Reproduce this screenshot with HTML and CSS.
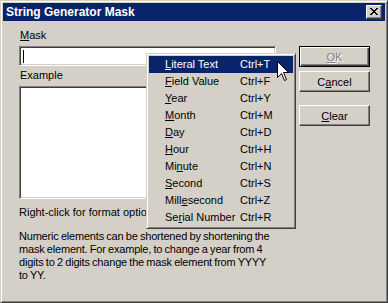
FILE: index.html
```html
<!DOCTYPE html>
<html lang="en">
<head>
    <meta charset="UTF-8">
    <title>String Generator Mask</title>
    <link rel="stylesheet" href="styles.css">
</head>
<body>

<div class="window">
    <div class="title-bar">
        <span class="title-text">String Generator Mask</span>
        <button class="close-btn">
            <svg width="8" height="7" viewBox="0 0 8 7"><path d="M0 0h2v1H0z M6 0h2v1H6z M1 1h2v1H1z M5 1h2v1H5z M2 2h4v1H2z M3 3h2v1H3z M2 4h4v1H2z M1 5h2v1H1z M5 5h2v1H5z M0 6h2v1H0z M6 6h2v1H6z" fill="#000"/></svg>
        </button>
    </div>

    <div class="dialog-body">
        <div class="left-col">
            <label class="field-label"><u>M</u>ask</label>
            <div class="edit-box mask-box"><span class="caret"></span></div>
            <label class="field-label example-label">Example</label>
            <div class="edit-box example-box"></div>
            <p class="hint">Right-click for format options</p>
            <p class="note">Numeric elements can be shortened by shortening the mask element. For example, to change a year from 4 digits to 2 digits change the mask element from YYYY to YY.</p>
        </div>
        <div class="button-col">
            <button class="btn btn-default" disabled><u>O</u>K</button>
            <button class="btn">C<u>a</u>ncel</button>
            <button class="btn btn-clear"><u>C</u>lear</button>
        </div>
    </div>

    <!-- right-click format menu -->
    <div class="context-menu">
        <div class="menu-item selected"><span><u>L</u>iteral Text</span><span>Ctrl+T</span></div>
        <div class="menu-item"><span><u>F</u>ield Value</span><span>Ctrl+F</span></div>
        <div class="menu-item"><span><u>Y</u>ear</span><span>Ctrl+Y</span></div>
        <div class="menu-item"><span><u>M</u>onth</span><span>Ctrl+M</span></div>
        <div class="menu-item"><span><u>D</u>ay</span><span>Ctrl+D</span></div>
        <div class="menu-item"><span><u>H</u>our</span><span>Ctrl+H</span></div>
        <div class="menu-item"><span>Mi<u>n</u>ute</span><span>Ctrl+N</span></div>
        <div class="menu-item"><span><u>S</u>econd</span><span>Ctrl+S</span></div>
        <div class="menu-item"><span>Mill<u>e</u>second</span><span>Ctrl+Z</span></div>
        <div class="menu-item"><span>Se<u>r</u>ial Number</span><span>Ctrl+R</span></div>
    </div>

    <svg class="mouse-cursor" width="13" height="21" viewBox="0 0 13 21">
        <path d="M0.5 0.5 L0.5 16.5 L4.5 12.5 L7.5 19.5 L9.5 18.5 L6.5 11.5 L11.5 11.5 Z" fill="#fff" stroke="#000" stroke-width="1"/>
    </svg>
</div>

</body>
</html>
```

FILE: styles.css
```css
* {
    margin: 0;
    padding: 0;
    box-sizing: border-box;
}

body {
    background: #d4d0c8;
    font-family: "Liberation Sans", Arial, sans-serif;
    font-size: 11px;
    line-height: 13px;
    color: #000;
}

u {
    text-decoration: underline;
    text-underline-offset: 1px;
}

.window {
    position: relative;
    width: 388px;
    height: 303px;
    padding: 2px;
    background: #d4d0c8;
    border: 1px solid;
    border-color: #d4d0c8 #404040 #404040 #d4d0c8;
    box-shadow: inset 1px 1px #fff, inset -1px -1px #808080;
}

.title-bar {
    height: 18px;
    background: #0a246a;
    display: flex;
    align-items: center;
    justify-content: space-between;
    padding-left: 3px;
}

.title-text {
    color: #fff;
    font-weight: bold;
    font-size: 12px;
}

.close-btn {
    width: 16px;
    height: 14px;
    margin-right: 3px;
    background: #d4d0c8;
    border: 1px solid;
    border-color: #fff #404040 #404040 #fff;
    box-shadow: inset -1px -1px #808080;
    display: flex;
    align-items: center;
    justify-content: center;
    padding: 0 1px 1px 0;
}

.close-btn svg {
    display: block;
}

.dialog-body {
    display: flex;
    gap: 23px;
    padding: 8px 0 0 16px;
}

.left-col {
    width: 257px;
    display: flex;
    flex-direction: column;
}

.field-label {
    display: block;
    padding-left: 1px;
    margin-bottom: 4px;
}

.example-label {
    margin-top: 3px;
}

.edit-box {
    background: #fff;
    border: 1px solid;
    border-color: #808080 #fff #fff #808080;
    box-shadow: inset 1px 1px #404040, inset -1px -1px #d4d0c8;
}

.mask-box {
    height: 20px;
    padding: 3px 0 0 3px;
}

.caret {
    display: block;
    width: 1px;
    height: 13px;
    background: #000;
}

.example-box {
    height: 113px;
}

.hint {
    margin-top: 7px;
    white-space: nowrap;
}

.note {
    margin-top: 11px;
    width: 254px;
    letter-spacing: -0.2px;
    word-spacing: -0.5px;
}

.button-col {
    width: 71px;
    display: flex;
    flex-direction: column;
    padding-top: 17px;
}

.btn {
    height: 21px;
    width: 71px;
    font-family: inherit;
    font-size: 11px;
    background: #d4d0c8;
    color: #000;
    border: 1px solid;
    border-color: #fff #404040 #404040 #fff;
    box-shadow: inset -1px -1px #808080;
    margin-bottom: 4px;
}

.btn-default {
    border-color: #000;
    box-shadow: inset 1px 1px #fff, inset -1px -1px #404040, inset -2px -2px #808080;
}

.btn:disabled {
    color: #808080;
    text-shadow: 1px 1px #fff;
}

.btn-clear {
    margin-top: 9px;
}

.context-menu {
    position: absolute;
    left: 145px;
    top: 52px;
    width: 150px;
    padding: 2px;
    background: #d4d0c8;
    border: 1px solid;
    border-color: #d4d0c8 #404040 #404040 #d4d0c8;
    box-shadow: inset 1px 1px #fff, inset -1px -1px #808080;
}

.menu-item {
    height: 17px;
    line-height: 17px;
    display: grid;
    grid-template-columns: 75px auto;
    padding-left: 16px;
    white-space: nowrap;
}

.menu-item.selected {
    background: #0a246a;
    color: #fff;
}

.mouse-cursor {
    position: absolute;
    left: 276px;
    top: 60px;
}
```
